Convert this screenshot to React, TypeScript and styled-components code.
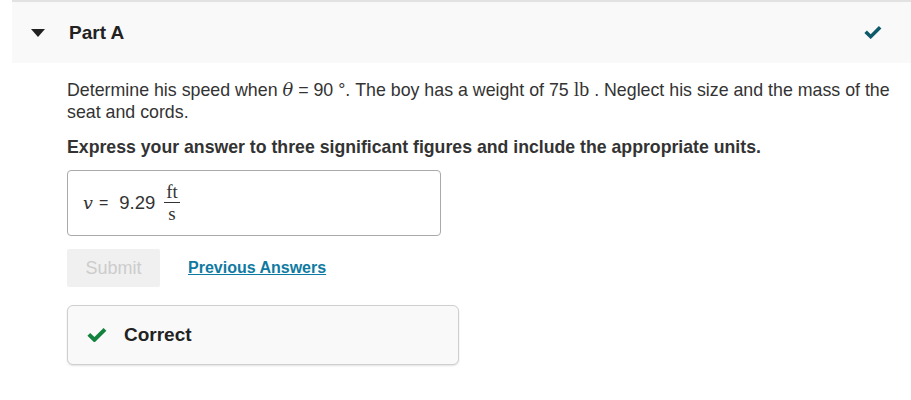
import React from "react";
import styled, { createGlobalStyle } from "styled-components";

const GlobalStyle = createGlobalStyle`
  html, body {
    margin: 0;
    padding: 0;
    background: #ffffff;
  }
  body {
    font-family: "Liberation Sans", Arial, sans-serif;
    color: #333333;
  }
`;

// heavy check mark, filled like the font icon in the reference
function CheckIcon({ color, width }: { color: string; width: number }) {
  return (
    <svg width={width} height={width * 0.72} viewBox="0 0 25 18" aria-hidden>
      <path
        d="M0.5 9.6 L4 6.1 L9.3 11.4 L20.7 0 L24.2 3.5 L9.3 18.2 Z"
        fill={color}
      />
    </svg>
  );
}

function App() {
  return (
    <Page>
      <GlobalStyle />
      <PartHeader>
        <Caret />
        <PartTitle>Part A</PartTitle>
        <HeaderCheck>
          <CheckIcon color="#0e5a6a" width={18} />
        </HeaderCheck>
      </PartHeader>

      <Body>
        <Question>
          Determine his speed when <MathVar>θ</MathVar> = 90 °. The boy has a
          weight of 75 <MathUnit>lb</MathUnit> . Neglect his size and the mass
          of the seat and cords.
        </Question>
        <Instruction>
          Express your answer to three significant figures and include the
          appropriate units.
        </Instruction>

        <AnswerBox>
          <MathVar>v</MathVar>
          <Equals>=</Equals>
          <Value>9.29</Value>
          <Fraction>
            <Numer>ft</Numer>
            <Denom>s</Denom>
          </Fraction>
        </AnswerBox>

        <Actions>
          <SubmitButton disabled>Submit</SubmitButton>
          <PrevLink href="#">Previous Answers</PrevLink>
        </Actions>

        <Feedback>
          <CheckIcon color="#13823f" width={20} />
          <FeedbackText>Correct</FeedbackText>
        </Feedback>
      </Body>
    </Page>
  );
}

const Page = styled.div`
  width: 911px;
  height: 400px;
  overflow: hidden;
`;

const PartHeader = styled.div`
  margin-left: 12px;
  height: 61px;
  border-top: 2px solid #e2e2e2;
  background: #f9f9f9;
  display: flex;
  align-items: center;
  padding-left: 19px;
  padding-right: 29px;
`;

const Caret = styled.span`
  width: 0;
  height: 0;
  border-left: 7.5px solid transparent;
  border-right: 7.5px solid transparent;
  border-top: 8px solid #222222;
  margin-top: 1px;
`;

const PartTitle = styled.h2`
  margin: 0 0 0 24px;
  font-size: 19px;
  font-weight: 700;
  color: #222222;
`;

const HeaderCheck = styled.span`
  margin-left: auto;
  display: flex;
`;

const Body = styled.div`
  padding: 15px 14px 0 67px;
`;

const Question = styled.p`
  margin: 0;
  font-size: 17.8px;
  line-height: 22px;
  color: #333333;
`;

const MathVar = styled.span`
  font-family: "DejaVu Serif", "Liberation Serif", serif;
  font-style: italic;
`;

const MathUnit = styled.span`
  font-family: "Liberation Serif", "DejaVu Serif", serif;
  font-size: 20px;
`;

const Instruction = styled.p`
  margin: 13px 0 0;
  font-size: 17.7px;
  line-height: 22px;
  font-weight: 700;
  color: #333333;
`;

const AnswerBox = styled.div`
  box-sizing: border-box;
  margin-top: 12px;
  width: 374px;
  height: 66px;
  border: 1px solid #aaaaaa;
  border-radius: 4px;
  display: flex;
  align-items: center;
  padding-left: 15px;
  font-size: 17.5px;
  color: #333333;
`;

const Equals = styled.span`
  margin: 0 11px 0 6px;
  font-size: 16px;
`;

const Value = styled.span`
  font-size: 18.5px;
`;

const Fraction = styled.span`
  display: inline-flex;
  flex-direction: column;
  align-items: center;
  margin-left: 9px;
  font-family: "Liberation Serif", "DejaVu Serif", serif;
  font-size: 19px;
  line-height: 18px;
`;

const Numer = styled.span`
  padding: 0 2px 1px;
  border-bottom: 1px solid #333333;
`;

const Denom = styled.span`
  padding-top: 2px;
`;

const Actions = styled.div`
  margin-top: 13px;
  display: flex;
  align-items: center;
  gap: 28px;
`;

const SubmitButton = styled.button`
  width: 93px;
  height: 38px;
  border: none;
  border-radius: 2px;
  background: #f0f0f0;
  color: #cccccc;
  font-family: "Liberation Sans", Arial, sans-serif;
  font-size: 18px;
  padding: 0;
`;

const PrevLink = styled.a`
  color: #0f7aa1;
  font-size: 16px;
  font-weight: 700;
  text-decoration: underline;
`;

const Feedback = styled.div`
  margin-top: 18px;
  width: 392px;
  height: 60px;
  border: 1px solid #cfcfcf;
  border-radius: 6px;
  background: #f9f9f9;
  box-shadow: 0 1px 2px rgba(0, 0, 0, 0.12);
  display: flex;
  align-items: center;
  padding-left: 19px;
  box-sizing: border-box;
`;

const FeedbackText = styled.span`
  margin-left: 17px;
  font-size: 19px;
  font-weight: 700;
  color: #222222;
`;

export default App;
